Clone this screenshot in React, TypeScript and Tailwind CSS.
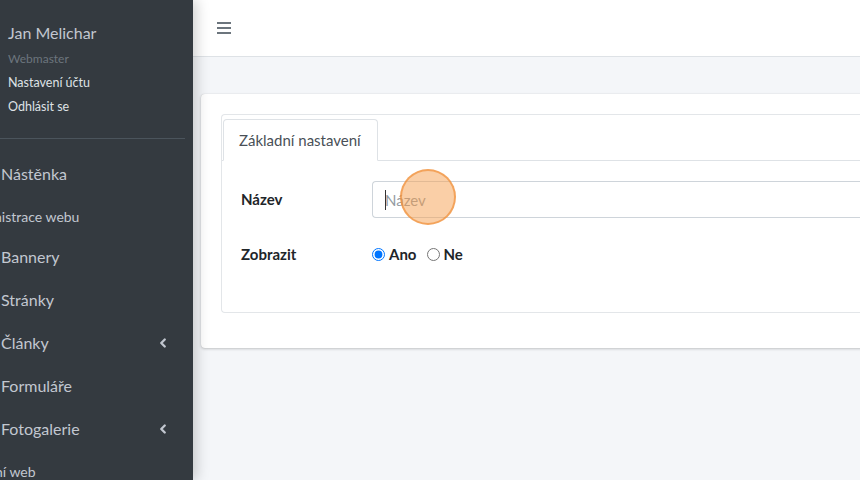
import { ChevronLeft } from "lucide-react";

const navItems = [
  { label: "Nástěnka" },
  { label: "Administrace webu", header: true, offset: "-ml-[38px]" },
  { label: "Bannery" },
  { label: "Stránky" },
  { label: "Články", chevron: true },
  { label: "Formuláře" },
  { label: "Fotogalerie", chevron: true },
  { label: "Hlavní web", header: true, offset: "-ml-[33px]" },
];

const Sidebar = () => (
  <aside className="relative z-10 w-[193px] shrink-0 overflow-hidden bg-[#343a40] shadow-[4px_0_12px_rgba(0,0,0,0.18)]">
    <div className="pl-2 pt-[22px]">
      <div className="text-[16px] leading-[22px] text-[#c2c7d0]">Jan Melichar</div>
      <div className="mt-[7px] text-[12px] leading-[16px] text-[#6c757d]">Webmaster</div>
      <div className="mt-[8px] text-[12.5px] leading-[16px] text-[#dfe2e6]">Nastavení účtu</div>
      <div className="mt-[8px] text-[12.5px] leading-[16px] text-[#dfe2e6]">Odhlásit se</div>
    </div>
    <div className="mr-2 mt-[23px] border-b border-[#4b545c]" />
    <ul className="mt-[13px]">
      {navItems.map((item) => (
        <li
          key={item.label}
          className={`flex items-center whitespace-nowrap text-[#c2c7d0] ${
            item.header ? "h-[40px] pt-[2px] text-[14px]" : "h-[43px] text-[16px]"
          }`}
        >
          <span className={item.header ? item.offset : "pl-px"}>{item.label}</span>
          {item.chevron && (
            <ChevronLeft className="ml-auto mr-[23px] h-[14px] w-[14px]" strokeWidth={4} />
          )}
        </li>
      ))}
    </ul>
  </aside>
);

const Header = () => (
  <header className="flex h-[57px] shrink-0 items-center border-b border-[#dee2e6] bg-white pl-[24px]">
    <svg width="14" height="12" viewBox="0 0 14 12" className="text-[#6c757d]">
      <rect x="0" y="0" width="14" height="2" fill="currentColor" />
      <rect x="0" y="5" width="14" height="2" fill="currentColor" />
      <rect x="0" y="10" width="14" height="2" fill="currentColor" />
    </svg>
  </header>
);

const Form = () => (
  <div className="-mr-10 rounded bg-white pb-[35px] pl-[20px] pt-[20px] shadow-[0_0_1px_rgba(0,0,0,0.15),0_1px_3px_rgba(0,0,0,0.2)]">
    <div className="rounded border border-r-0 border-[#e3e6e9]">
      <div className="flex border-b border-[#dee2e6] pt-[4px]">
        <div className="-mb-px ml-px rounded-t border border-[#dee2e6] border-b-white bg-white py-[10px] pl-[15px] pr-[16px] text-[15px] leading-[20px] text-[#495057]">
          Základní nastavení
        </div>
      </div>
      <div className="pb-[46px] pl-[19px] pt-[20px]">
        <div className="flex items-center">
          <label className="w-[131px] text-[15px] font-bold text-[#212529]">Název</label>
          <div className="relative flex-1">
            <input
              type="text"
              placeholder="Název"
              className="h-[37px] w-full rounded-l border border-r-0 border-[#ced4da] px-[12px] text-[15px] text-[#495057] outline-none placeholder:text-[#939ba2]"
            />
            <span className="absolute left-[13px] top-[9px] h-[20px] w-px bg-[#333]" />
            <span className="absolute left-[28px] top-[-12px] h-[56px] w-[56px] rounded-full border-2 border-[rgba(240,140,50,0.65)] bg-[rgba(246,160,80,0.5)]" />
          </div>
        </div>
        <div className="mt-[24px] flex h-[24px] items-center">
          <span className="w-[131px] text-[15px] font-bold text-[#212529]">Zobrazit</span>
          <label className="flex items-center text-[15px] font-bold text-[#212529]">
            <input type="radio" name="show" defaultChecked className="m-0 mr-[4px] h-[13px] w-[13px]" />
            Ano
          </label>
          <label className="ml-[11px] flex items-center text-[15px] font-bold text-[#212529]">
            <input type="radio" name="show" className="m-0 mr-[3px] h-[13px] w-[13px]" />
            Ne
          </label>
        </div>
      </div>
    </div>
  </div>
);

export default function App() {
  return (
    <div className="flex h-[480px] w-[860px] overflow-hidden font-['Lato',sans-serif]">
      <Sidebar />
      <div className="flex min-w-0 flex-1 flex-col bg-[#f4f6f9]">
        <Header />
        <main className="pl-2 pt-[37px]">
          <Form />
        </main>
      </div>
    </div>
  );
}
